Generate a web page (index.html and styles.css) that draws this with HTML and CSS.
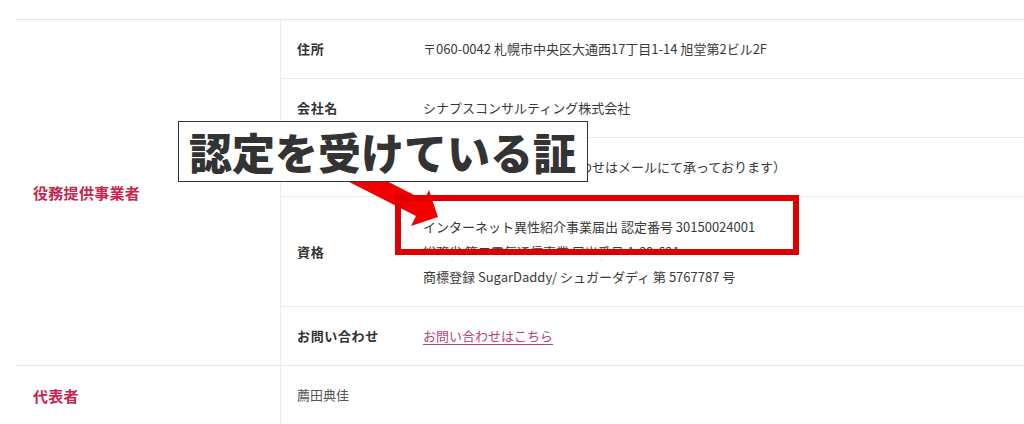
FILE: index.html
```html
<!DOCTYPE html>
<html lang="ja">
<head>
<meta charset="utf-8">
<link rel="stylesheet" href="styles.css">
</head>
<body>
<div class="page">
  <section class="group">
    <div class="group-head">役務提供事業者</div>
    <div class="group-body">
      <div class="row">
        <div class="row-label">住所</div>
        <div class="row-value">〒060-0042 札幌市中央区大通西17丁目1-14 旭堂第2ビル2F</div>
      </div>
      <div class="row">
        <div class="row-label">会社名</div>
        <div class="row-value">シナプスコンサルティング株式会社</div>
      </div>
      <div class="row">
        <div class="row-label">電話番号</div>
        <div class="row-value">電話番号非公開（お問い合わせはメールにて承っております）</div>
      </div>
      <div class="row">
        <div class="row-label">資格</div>
        <div class="row-value multi">
          <p>インターネット異性紹介事業届出 認定番号 30150024001</p>
          <p>総務省 第二電気通信事業 届出番号 A-29-621</p>
          <p>商標登録 SugarDaddy/ シュガーダディ 第 5767787 号</p>
        </div>
      </div>
      <div class="row">
        <div class="row-label">お問い合わせ</div>
        <div class="row-value"><a class="link" href="#">お問い合わせはこちら</a></div>
      </div>
    </div>
  </section>
  <section class="group last">
    <div class="group-head">代表者</div>
    <div class="group-body">
      <div class="row">
        <div class="row-value plain">薦田典佳</div>
      </div>
    </div>
  </section>

  <svg class="arrow" width="1024" height="424" viewBox="0 0 1024 424">
    <polygon points="314,144 424,200 429,190 438,217 411,226 416,216 306,160" fill="#f20000"/>
  </svg>
  <div class="highlight"></div>
  <div class="callout">認定を受けている証</div>
</div>
</body>
</html>
```

FILE: styles.css
```css
html, body {
  margin: 0;
  padding: 0;
  background: #fff;
}
body {
  font-family: "Noto Sans CJK JP", "Noto Sans", sans-serif;
  color: #333;
}
.page {
  position: relative;
  width: 1024px;
  height: 424px;
  overflow: hidden;
  padding: 19px 0 0 16px;
  box-sizing: border-box;
}
.group {
  display: flex;
  border-top: 1px solid #e6e6e6;
}
.group.last {
  border-top: 1px solid #e6e6e6;
}
.group-head {
  width: 265px;
  box-sizing: border-box;
  border-right: 1px solid #ececec;
  padding-left: 17px;
  display: flex;
  align-items: center;
  font-size: 15px;
  font-weight: 700;
  color: #c8244c;
  letter-spacing: 0.02em;
}
.group-body {
  flex: 1;
}
.row {
  display: flex;
  border-bottom: 1px solid #ececec;
}
.row:last-child {
  border-bottom: none;
}
.row-label {
  width: 142px;
  flex: none;
  box-sizing: border-box;
  padding: 17px 0 17px 16px;
  font-size: 13px;
  line-height: 24px;
  font-weight: 700;
  color: #333;
  letter-spacing: 0.05em;
  display: flex;
  align-items: center;
}
.row-value {
  padding: 17px 0;
  font-size: 13px;
  line-height: 24px;
  color: #3a3a3a;
}
.row-value.plain {
  padding-left: 16px;
  color: #555;
}
.row-value.multi p {
  margin: 0;
  line-height: 25px;
}
.link {
  color: #b8457c;
  text-decoration: underline;
  text-underline-offset: 3px;
}
.arrow {
  position: absolute;
  left: 0;
  top: 0;
  z-index: 1;
}
.highlight {
  position: absolute;
  left: 395px;
  top: 195px;
  width: 404px;
  height: 60px;
  box-sizing: border-box;
  border: 6px solid #dc0000;
  box-shadow: 0 4px 0 #fff;
  z-index: 2;
}
.callout {
  position: absolute;
  left: 178px;
  top: 121px;
  width: 410px;
  height: 61px;
  box-sizing: border-box;
  border: 1px solid #333;
  background: #fff;
  z-index: 3;
  display: flex;
  align-items: center;
  padding-left: 10px;
  font-size: 43px;
  font-weight: 900;
  color: #333;
  letter-spacing: 0;
  line-height: 1;
}
```
